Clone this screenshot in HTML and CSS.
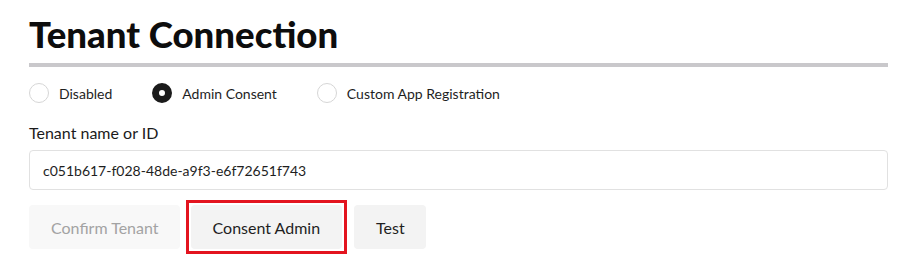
FILE: index.html
```html
<!DOCTYPE html>
<html>
<head>
<meta charset="utf-8">
<link rel="stylesheet" href="styles.css">
</head>
<body>
<div class="panel">
  <h1 class="title">Tenant Connection</h1>
  <div class="rule"></div>
  <div class="radios">
    <label class="radio"><span class="dot"></span>Disabled</label>
    <label class="radio"><span class="dot on"></span>Admin Consent</label>
    <label class="radio"><span class="dot"></span>Custom App Registration</label>
  </div>
  <div class="field-label">Tenant name or ID</div>
  <div class="input">c051b617-f028-48de-a9f3-e6f72651f743</div>
  <div class="buttons">
    <button class="btn disabled">Confirm Tenant</button>
    <span class="highlight"><button class="btn">Consent Admin</button></span>
    <button class="btn test">Test</button>
  </div>
</div>
</body>
</html>
```
FILE: styles.css
```css
html, body {
  margin: 0;
  padding: 0;
  background: #ffffff;
}
body {
  font-family: Lato, "Open Sans", sans-serif;
  color: #1b1b1b;
}
.panel {
  padding: 0 34px 0 29px;
}
.title {
  margin: 0;
  padding-top: 12px;
  font-size: 36.6px;
  font-weight: 900;
  line-height: 44px;
  color: #0d0d0d;
}
.rule {
  margin-top: 7px;
  height: 4px;
  background: #c9c8cb;
}
.radios {
  display: flex;
  align-items: center;
  margin-top: 16px;
  height: 20px;
}
.radio {
  display: flex;
  align-items: center;
  font-size: 14px;
  color: #1e1e1e;
  margin-right: 40px;
}
.dot {
  width: 18px;
  height: 18px;
  border: 1px solid #d6d6d6;
  border-radius: 50%;
  margin-right: 10px;
  box-sizing: content-box;
}
.dot.on {
  width: 6px;
  height: 6px;
  border: 7px solid #1b1b1b;
}
.field-label {
  margin-top: 20px;
  font-size: 16px;
  line-height: 20px;
  color: #1b1b1b;
}
.input {
  margin-top: 7px;
  height: 38px;
  border: 1px solid #e1e1e1;
  border-radius: 4px;
  display: flex;
  align-items: center;
  padding-left: 13px;
  font-size: 14px;
  color: #1e1e1e;
}
.buttons {
  display: flex;
  align-items: center;
  margin-top: 10px;
  gap: 6px;
}
.btn {
  font-family: Lato, "Open Sans", sans-serif;
  font-size: 16px;
  height: 44px;
  border: none;
  border-radius: 4px;
  background: #f3f3f3;
  color: #1f1f1f;
  padding: 0 22px;
  cursor: pointer;
}
.btn.disabled {
  background: #f8f8f8;
  color: #a3a3a3;
  padding: 0 21px 0 22px;
}
.btn.test {
  margin-left: 1px;
  padding: 0 21px 0 22px;
}
.highlight {
  display: flex;
  border: 3px solid #e3141f;
  padding: 2px;
}
```
